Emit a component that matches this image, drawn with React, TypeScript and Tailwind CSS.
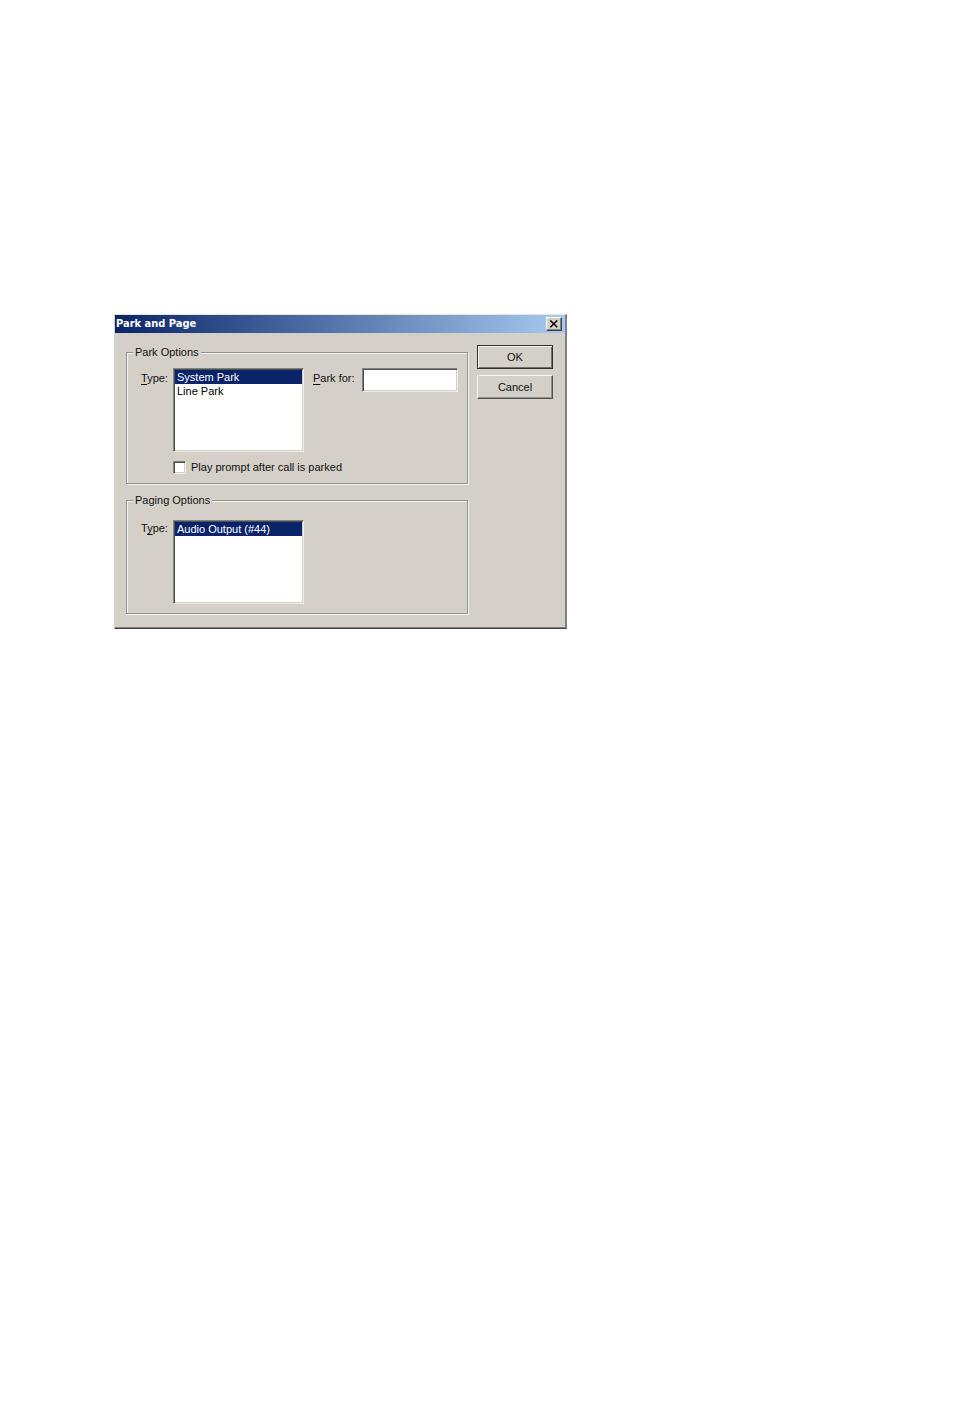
import type { ReactNode } from "react";

const sunken =
  "border border-t-[#808080] border-l-[#808080] border-r-[#f0eee8] border-b-[#f0eee8] bg-white shadow-[inset_1px_1px_0_#505050,inset_-1px_-1px_0_#d4d0c8]";

function Group({ title, children }: { title: string; children: ReactNode }) {
  return (
    <fieldset className="min-w-0 border border-[#929292] pr-2 pb-[9px] pl-[14px] shadow-[1px_1px_0_#f4f3ef,inset_1px_1px_0_#f4f3ef]">
      <legend className="-ml-2 bg-[#d4d0c8] px-[2px] leading-[14px]">{title}</legend>
      {children}
    </fieldset>
  );
}

function ListBox({ id, items }: { id: string; items: string[] }) {
  return (
    <select
      id={id}
      size={5}
      defaultValue={items[0]}
      className={`h-[84px] w-[131px] shrink-0 appearance-none overflow-hidden rounded-none p-px outline-none ${sunken}`}
    >
      {items.map((item) => (
        <option
          key={item}
          value={item}
          className="min-h-[14px] px-[2px] pt-px pb-0 leading-[13px] text-black checked:bg-[linear-gradient(#0a246a,#0a246a)] checked:[-webkit-text-fill-color:#ffffff]"
        >
          {item}
        </option>
      ))}
    </select>
  );
}

function PushButton({ children, primary = false }: { children: ReactNode; primary?: boolean }) {
  return (
    <button
      type="button"
      className={`h-6 w-full border bg-[#d4d0c8] pb-px text-center leading-[14px] ${
        primary
          ? "border-[#303030] shadow-[inset_1px_1px_0_#f6f5f2,inset_-1px_-1px_0_#707070]"
          : "border-t-[#f6f5f2] border-l-[#f6f5f2] border-r-[#505050] border-b-[#505050] shadow-[inset_-1px_-1px_0_#909090]"
      }`}
    >
      {children}
    </button>
  );
}

export default function App() {
  return (
    <main className="min-h-screen bg-white pt-[314px] pl-[114px] font-['Liberation_Sans',Arial,sans-serif] text-[11px] text-[#111111]">
      <section
        role="dialog"
        aria-labelledby="dialog-title"
        className="w-full max-w-[453px] border-t border-r-2 border-b border-l border-t-[#e9e6da] border-r-[#808084] border-b-[#404040] border-l-[#d4d0c8] bg-[#d4d0c8] shadow-[inset_0_-1px_0_#808080]"
      >
        <header className="flex h-[18px] items-center justify-between bg-[linear-gradient(90deg,#0a246a,#a6caf0)] pr-[3px] pl-px">
          <h1
            id="dialog-title"
            className="font-['DejaVu_Sans_Condensed','DejaVu_Sans',sans-serif] text-[11px] leading-[18px] font-bold text-white"
          >
            Park and Page
          </h1>
          <button
            type="button"
            aria-label="Close"
            className="flex h-[14px] w-4 items-center justify-center border border-t-white border-l-white border-r-[#404040] border-b-[#404040] bg-[#d4d0c8] shadow-[inset_-1px_-1px_0_#808080]"
          >
            <svg width="8" height="8" viewBox="0 0 8 8" aria-hidden="true">
              <path d="M0.3 0.5 L7.3 7.3 M7.3 0.5 L0.3 7.3" stroke="#000" strokeWidth="1.6" fill="none" />
            </svg>
          </button>
        </header>

        <div className="flex gap-[9px] pt-3 pr-3 pb-[14px] pl-[11px]">
          <div className="flex min-w-0 flex-1 flex-col gap-[9px]">
            <Group title="Park Options">
              <div className="flex items-start pt-[9px]">
                <label htmlFor="park-type" className="w-8 shrink-0 pt-[3px] leading-[14px]">
                  <u className="underline-offset-2">T</u>ype:
                </label>
                <ListBox id="park-type" items={["System Park", "Line Park"]} />
                <label htmlFor="park-for" className="ml-[9px] w-[49px] shrink-0 pt-[3px] leading-[14px]">
                  <u className="underline-offset-2">P</u>ark for:
                </label>
                <input
                  id="park-for"
                  type="text"
                  className={`h-6 w-24 min-w-0 rounded-none px-1 outline-none ${sunken}`}
                />
              </div>
              <div className="flex items-center gap-[5px] pt-[9px] pl-8">
                <input
                  id="play-prompt"
                  type="checkbox"
                  className={`h-[13px] w-[13px] shrink-0 appearance-none rounded-none ${sunken}`}
                />
                <label htmlFor="play-prompt" className="leading-[13px]">
                  Play prompt after call is parked
                </label>
              </div>
            </Group>

            <Group title="Paging Options">
              <div className="flex items-start pt-[13px]">
                <label htmlFor="paging-type" className="w-8 shrink-0 pt-px leading-[14px]">
                  T<u className="underline-offset-2">y</u>pe:
                </label>
                <ListBox id="paging-type" items={["Audio Output (#44)"]} />
              </div>
            </Group>
          </div>

          <div className="flex w-[76px] shrink-0 flex-col gap-[6px]">
            <PushButton primary>OK</PushButton>
            <PushButton>Cancel</PushButton>
          </div>
        </div>
      </section>
    </main>
  );
}
